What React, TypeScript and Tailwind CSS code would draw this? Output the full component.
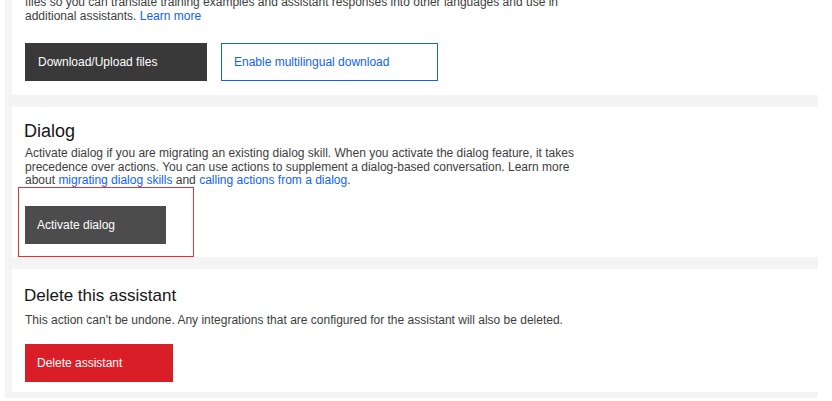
import React from 'react';

const font = { fontFamily: '"Liberation Sans", "Noto Sans", sans-serif' };

const Link = ({ children }: { children: React.ReactNode }) => (
  <a className="text-[#0f62fe] cursor-pointer">{children}</a>
);

export default function App() {
  return (
    <div className="w-[832px] h-[401px] overflow-hidden bg-white" style={font}>
      <div className="ml-[5px] w-[813px] bg-[#f4f4f4] pl-[7px] pb-[6px] flex flex-col gap-[12px]">
        {/* Download card (top cut off) */}
        <div className="bg-white pl-[13px] pr-4 pb-[14px] -mt-[5px]">
          <p className="text-[12px] leading-[14px] text-[#3d3d3d] whitespace-nowrap">
            files so you can translate training examples and assistant responses into other languages and use in
            <br />
            additional assistants. <Link>Learn more</Link>
          </p>
          <div className="flex gap-[14px] mt-[20px]">
            <button className="w-[182px] h-[38px] bg-[#393939] text-white text-[12px] text-left pl-[13px]">
              Download/Upload files
            </button>
            <button className="w-[217px] h-[38px] bg-white border border-[#0f62fe] text-[#0f62fe] text-[12px] text-left pl-[12px]">
              Enable multilingual download
            </button>
          </div>
        </div>

        {/* Dialog card */}
        <div className="bg-white pl-[13px] pr-4 pt-[13px]">
          <h3 className="text-[18px] leading-[22px] text-[#161616] -ml-[1px]">Dialog</h3>
          <p className="text-[12px] leading-[13.5px] text-[#3d3d3d] whitespace-nowrap mt-[5px]">
            Activate dialog if you are migrating an existing dialog skill. When you activate the dialog feature, it takes
            <br />
            precedence over actions. You can use actions to supplement a dialog-based conversation. Learn more
            <br />
            about <Link>migrating dialog skills</Link> and <Link>calling actions from a dialog</Link>.
          </p>
          <div className="-ml-[7px] w-[176px] border border-[#e5323a] pl-[6px] pt-[18px] pb-[12px] -mt-[1px]">
            <button className="w-[141px] h-[38px] bg-[#4c4c4c] text-white text-[12px] text-left pl-[12px]">
              Activate dialog
            </button>
          </div>
        </div>

        {/* Delete card */}
        <div className="bg-white pl-[13px] pr-4 pt-[16px] pb-[10px]">
          <h3 className="text-[17px] leading-[22px] text-[#161616] -ml-[1px]">Delete this assistant</h3>
          <p className="text-[12px] leading-[14px] text-[#3d3d3d] mt-[6px]">
            This action can't be undone. Any integrations that are configured for the assistant will also be deleted.
          </p>
          <button className="mt-[17px] w-[148px] h-[38px] bg-[#da1e28] text-white text-[12px] text-left pl-[12px]">
            Delete assistant
          </button>
        </div>
      </div>
    </div>
  );
}
